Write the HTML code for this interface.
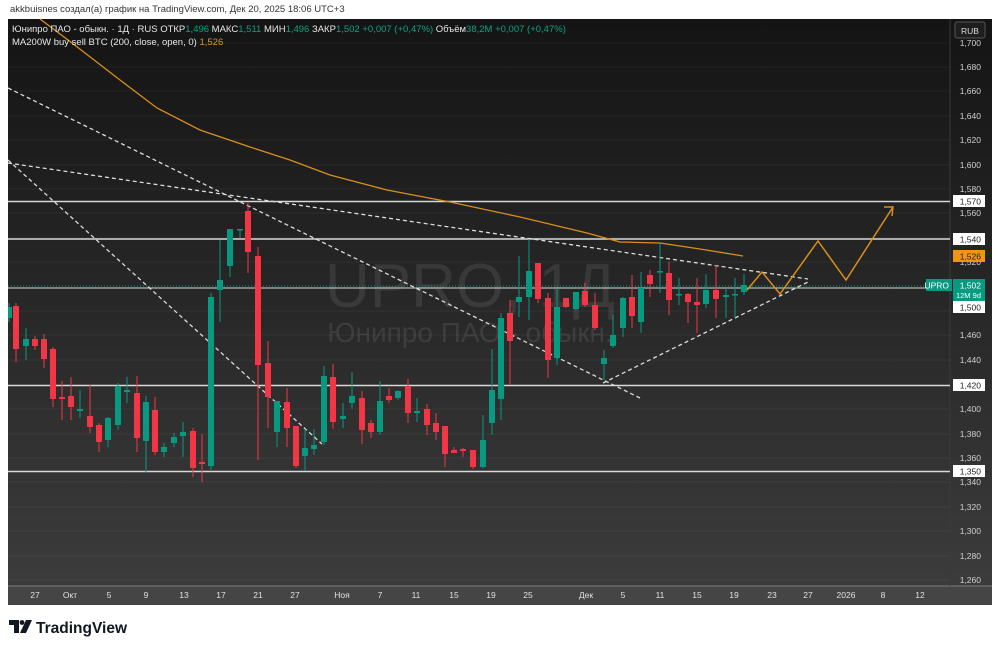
<!DOCTYPE html>
<html><head><meta charset="utf-8"><style>
body{margin:0;width:1000px;height:648px;background:#fff;overflow:hidden;font-family:"Liberation Sans","DejaVu Sans",sans-serif;}
</style></head><body>
<svg width="1000" height="648" xmlns="http://www.w3.org/2000/svg" style="position:absolute;left:0;top:0">
<defs>
<linearGradient id="bg" x1="0" y1="0" x2="0" y2="1">
<stop offset="0" stop-color="#141414"/><stop offset="0.45" stop-color="#262626"/><stop offset="1" stop-color="#3d3d3d"/>
</linearGradient>
</defs>
<text x="10" y="12" font-size="9.5" fill="#333" font-family="Liberation Sans, DejaVu Sans, sans-serif">akkbuisnes создал(а) график на TradingView.com, Дек 20, 2025 18:06 UTC+3</text>
<rect x="8" y="19" width="984" height="586" fill="url(#bg)"/>
<rect x="8" y="586" width="984" height="19" fill="#454545"/>
<line x1="8" y1="586" x2="992" y2="586" stroke="#6a6a6a" stroke-width="1.5"/>
<line x1="950" y1="19" x2="950" y2="586" stroke="#3a3a3a" stroke-width="1"/>
<!-- grid -->
<g stroke="#ffffff" stroke-opacity="0.05" stroke-width="1">
<line x1="8" y1="43" x2="950" y2="43"/><line x1="8" y1="67" x2="950" y2="67"/><line x1="8" y1="91" x2="950" y2="91"/><line x1="8" y1="116" x2="950" y2="116"/><line x1="8" y1="140" x2="950" y2="140"/><line x1="8" y1="165" x2="950" y2="165"/><line x1="8" y1="189" x2="950" y2="189"/><line x1="8" y1="213" x2="950" y2="213"/><line x1="8" y1="238" x2="950" y2="238"/><line x1="8" y1="262" x2="950" y2="262"/><line x1="8" y1="311" x2="950" y2="311"/><line x1="8" y1="335" x2="950" y2="335"/><line x1="8" y1="360" x2="950" y2="360"/><line x1="8" y1="409" x2="950" y2="409"/><line x1="8" y1="434" x2="950" y2="434"/><line x1="8" y1="458" x2="950" y2="458"/><line x1="8" y1="482" x2="950" y2="482"/><line x1="8" y1="507" x2="950" y2="507"/><line x1="8" y1="531" x2="950" y2="531"/><line x1="8" y1="556" x2="950" y2="556"/><line x1="8" y1="580" x2="950" y2="580"/>
</g>
<!-- watermark -->
<text x="470" y="307" font-size="62" fill="#ffffff" fill-opacity="0.09" text-anchor="middle" font-family="Liberation Sans, sans-serif">UPRO, 1Д</text>
<text x="470" y="342" font-size="28" fill="#ffffff" fill-opacity="0.09" text-anchor="middle" font-family="Liberation Sans, sans-serif">Юнипро ПАО - обыкн.</text>
<!-- horizontal levels -->
<g stroke="#d8d8d8" stroke-width="1.5">
<line x1="8" y1="201.5" x2="950" y2="201.5"/><line x1="8" y1="239" x2="950" y2="239"/><line x1="8" y1="385.5" x2="950" y2="385.5"/><line x1="8" y1="471.5" x2="950" y2="471.5"/>
<line x1="8" y1="288" x2="950" y2="288" stroke-width="1"/>
</g>
<line x1="8" y1="286" x2="950" y2="286" stroke="#089981" stroke-width="1" stroke-dasharray="1 2"/>
<!-- dashed trend lines -->
<g stroke="#dcdcdc" stroke-width="1.3" stroke-dasharray="4 3" fill="none">
<line x1="8" y1="88" x2="640" y2="398"/>
<line x1="8" y1="160" x2="322" y2="444"/>
<line x1="8" y1="163" x2="808" y2="279"/>
<line x1="603" y1="383" x2="808" y2="282"/>
</g>
<!-- MA -->
<polyline fill="none" stroke="#d88f1c" stroke-width="1.3" points="40,19 72,43 120,80 157,108 200,130 250,147 290,160 330,175 387,190 450,202 520,217 587,233 620,242 660,243 700,249 743,256"/>
<!-- candles -->
<g stroke="#089981" stroke-width="1">
<path d="M9 303V322M26 328V360M80 390V418M108 417V447M118 383V430M127 377V403M146 396V472M164 443V457M174 433V447M183 422V457M211 293V470M220 240V322M230 229V277M240 229V238M277 401V447M305 429V471M314 429V455M324 366V445M343 403V428M352 372V409M380 381V435M398 390V400M417 398V422M483 415V468M492 349V435M501 313V420M519 256V317M529 239V320M557 288V365M576 292V310M604 350V380M613 315V348M623 297V337M641 272V333M660 242V293M679 278V305M706 274V308M726 288V318M735 278V318M744 274V295"/>
</g>
<g fill="#089981">
<rect x="8" y="307" width="4" height="11"/><rect x="23" y="339" width="6" height="7"/><rect x="77" y="409" width="6" height="2"/><rect x="105" y="418" width="6" height="22"/><rect x="115" y="386" width="6" height="39"/><rect x="124" y="390" width="6" height="2"/><rect x="143" y="402" width="6" height="39"/><rect x="161" y="447" width="6" height="5"/><rect x="171" y="437" width="6" height="6"/><rect x="180" y="432" width="6" height="4"/><rect x="208" y="297" width="6" height="169"/><rect x="217" y="280" width="6" height="10"/><rect x="227" y="229" width="6" height="37"/><rect x="237" y="229" width="6" height="1.5"/><rect x="274" y="401" width="6" height="31"/><rect x="302" y="448" width="6" height="8"/><rect x="311" y="445" width="6" height="4"/><rect x="321" y="376" width="6" height="66"/><rect x="340" y="416" width="6" height="3"/><rect x="349" y="396" width="6" height="7"/><rect x="377" y="401" width="6" height="31"/><rect x="395" y="391" width="6" height="7"/><rect x="414" y="411" width="6" height="2"/><rect x="480" y="440" width="6" height="27"/><rect x="489" y="390" width="6" height="33"/><rect x="498" y="318" width="6" height="81"/><rect x="516" y="297" width="6" height="5"/><rect x="526" y="271" width="6" height="26"/><rect x="554" y="307" width="6" height="51"/><rect x="573" y="292" width="6" height="17"/><rect x="601" y="358" width="6" height="6"/><rect x="610" y="335" width="6" height="11"/><rect x="620" y="298" width="6" height="30"/><rect x="638" y="288" width="6" height="34"/><rect x="657" y="271" width="6" height="1.5"/><rect x="676" y="294" width="6" height="1.5"/><rect x="703" y="290" width="6" height="14"/><rect x="723" y="295" width="6" height="2"/><rect x="732" y="294" width="6" height="1.5"/><rect x="741" y="285" width="6" height="7"/>
</g>
<g stroke="#f23645" stroke-width="1">
<path d="M16 303V362M35 336V350M44 334V368M53 347V407M62 381V420M71 377V420M90 385V433M99 423V452M137 376V452M155 397V455M193 428V477M202 434V482M248 203V273M258 247V460M268 341V428M287 388V447M296 426V468M333 364V429M362 391V444M371 420V438M389 388V403M408 379V423M427 404V435M436 413V440M445 426V467M454 447V453M463 448V457M473 450V469M510 300V385M538 263V303M548 293V378M566 298V308M585 283V307M595 293V330M632 275V328M650 270V297M669 262V315M688 293V323M697 278V333M716 265V318"/>
</g>
<g fill="#f23645">
<rect x="13" y="306" width="6" height="43"/><rect x="32" y="339" width="6" height="7"/><rect x="41" y="339" width="6" height="20"/><rect x="50" y="349" width="6" height="50"/><rect x="59" y="397" width="6" height="2"/><rect x="68" y="396" width="6" height="11"/><rect x="87" y="416" width="6" height="11"/><rect x="96" y="425" width="6" height="17"/><rect x="134" y="393" width="6" height="45"/><rect x="152" y="410" width="6" height="42"/><rect x="190" y="431" width="6" height="37"/><rect x="199" y="462" width="6" height="2"/><rect x="245" y="211" width="6" height="41"/><rect x="255" y="256" width="6" height="109"/><rect x="265" y="363" width="6" height="34"/><rect x="284" y="402" width="6" height="26"/><rect x="293" y="426" width="6" height="40"/><rect x="330" y="377" width="6" height="45"/><rect x="359" y="398" width="6" height="32"/><rect x="368" y="423" width="6" height="9"/><rect x="386" y="396" width="6" height="4"/><rect x="405" y="386" width="6" height="27"/><rect x="424" y="409" width="6" height="16"/><rect x="433" y="423" width="6" height="9"/><rect x="442" y="426" width="6" height="28"/><rect x="451" y="450" width="6" height="3"/><rect x="460" y="449" width="6" height="2"/><rect x="470" y="450" width="6" height="17"/><rect x="507" y="313" width="6" height="28"/><rect x="535" y="263" width="6" height="36"/><rect x="545" y="298" width="6" height="62"/><rect x="563" y="298" width="6" height="9"/><rect x="582" y="291" width="6" height="14"/><rect x="592" y="305" width="6" height="23"/><rect x="629" y="297" width="6" height="19"/><rect x="647" y="275" width="6" height="9"/><rect x="666" y="273" width="6" height="27"/><rect x="685" y="294" width="6" height="8"/><rect x="694" y="302" width="6" height="3"/><rect x="713" y="290" width="6" height="9"/>
</g>
<!-- projection -->
<polyline fill="none" stroke="#d88f1c" stroke-width="1.5" points="747,290 762,272 780,294 818,241 846,280 893,207"/>
<polyline fill="none" stroke="#d88f1c" stroke-width="1.5" points="884,207 893,207 892,216"/>
<!-- legend -->
<g font-size="9.5" font-family="Liberation Sans, sans-serif">
<text x="12" y="32" fill="#e6e6e6">Юнипро ПАО - обыкн. · 1Д · RUS  <tspan>ОТКР</tspan><tspan fill="#0aa383">1,496</tspan>  МАКС<tspan fill="#0aa383">1,511</tspan>  МИН<tspan fill="#0aa383">1,496</tspan>  ЗАКР<tspan fill="#0aa383">1,502  +0,007 (+0,47%)</tspan>  Объём<tspan fill="#0aa383">38,2M  +0,007 (+0,47%)</tspan></text>
<text x="12" y="45" fill="#e6e6e6">MA200W buy sell BTC (200, close, open, 0)  <tspan fill="#e8951e">1,526</tspan></text>
</g>
<!-- price axis -->
<g font-size="8.5" fill="#d0d0d0" font-family="Liberation Sans, sans-serif" text-anchor="end">
<text x="981" y="46">1,700</text><text x="981" y="70">1,680</text><text x="981" y="94">1,660</text><text x="981" y="119">1,640</text><text x="981" y="143">1,620</text><text x="981" y="168">1,600</text><text x="981" y="192">1,580</text><text x="981" y="216">1,560</text><text x="981" y="265">1,520</text><text x="981" y="338">1,460</text><text x="981" y="363">1,440</text><text x="981" y="412">1,400</text><text x="981" y="437">1,380</text><text x="981" y="461">1,360</text><text x="981" y="485">1,340</text><text x="981" y="510">1,320</text><text x="981" y="534">1,300</text><text x="981" y="559">1,280</text><text x="981" y="583">1,260</text>
</g>
<rect x="955" y="22" width="30" height="16" rx="2" fill="#1e1e1e" stroke="#555"/>
<text x="970" y="34" font-size="8.5" fill="#ddd" text-anchor="middle">RUB</text>
<g font-size="8.5" font-family="Liberation Sans, sans-serif" text-anchor="end">
<rect x="953" y="195" width="32" height="12" fill="#fff"/><text x="981" y="204.5" fill="#222">1,570</text>
<rect x="953" y="233" width="32" height="12" fill="#fff"/><text x="981" y="242.5" fill="#222">1,540</text>
<rect x="953" y="250" width="32" height="12" fill="#f0960e"/><text x="981" y="259.5" fill="#222">1,526</text>
<rect x="953" y="279" width="32" height="22" fill="#089981"/><text x="981" y="288.5" fill="#fff">1,502</text><text x="981" y="298" fill="#fff" font-size="7.5">12M 9d</text>
<rect x="926" y="279" width="26" height="12" fill="#089981"/><text x="949" y="288.5" fill="#fff">UPRO</text>
<rect x="953" y="301" width="32" height="12" fill="#fff"/><text x="981" y="310.5" fill="#222">1,500</text>
<rect x="953" y="379" width="32" height="12" fill="#fff"/><text x="981" y="388.5" fill="#222">1,420</text>
<rect x="953" y="465" width="32" height="12" fill="#fff"/><text x="981" y="474.5" fill="#222">1,350</text>
</g>
<!-- time axis -->
<g font-size="8.5" fill="#e0e0e0" font-family="Liberation Sans, sans-serif" text-anchor="middle">
<text x="35" y="598">27</text><text x="70" y="598">Окт</text><text x="109" y="598">5</text><text x="146" y="598">9</text><text x="184" y="598">13</text><text x="221" y="598">17</text><text x="258" y="598">21</text><text x="295" y="598">27</text><text x="342" y="598">Ноя</text><text x="380" y="598">7</text><text x="416" y="598">11</text><text x="454" y="598">15</text><text x="491" y="598">19</text><text x="528" y="598">25</text><text x="586" y="598">Дек</text><text x="623" y="598">5</text><text x="660" y="598">11</text><text x="697" y="598">15</text><text x="734" y="598">19</text><text x="772" y="598">23</text><text x="808" y="598">27</text><text x="846" y="598">2026</text><text x="883" y="598">8</text><text x="920" y="598">12</text>
</g>
<!-- logo -->
<g fill="#131722">
<path d="M9 620H19V633H14V625H9Z"/>
<circle cx="22" cy="622.5" r="2.4"/>
<path d="M26 620H32L26 633H20Z"/>
</g>
<text x="36" y="633" font-size="15.5" font-weight="bold" fill="#131722" font-family="Liberation Sans, sans-serif">TradingView</text>
</svg>
</body></html>
